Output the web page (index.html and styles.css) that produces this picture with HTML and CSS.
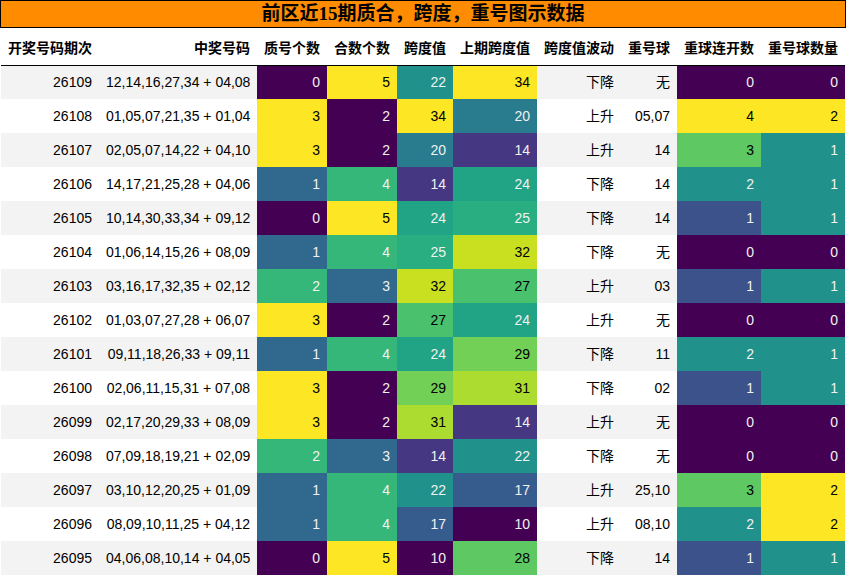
FILE: index.html
```html
<!DOCTYPE html>
<html lang="zh">
<head>
<meta charset="utf-8">
<title>前区近15期质合，跨度，重号图示数据</title>
<link rel="stylesheet" href="styles.css">
</head>
<body>
<div class="sheet">
  <div class="title">前区近15期质合，跨度，重号图示数据</div>
  <table class="grid">
    <colgroup>
      <col class="w-idx"><col class="w-nums"><col class="w-70"><col class="w-70"><col class="w-56"><col class="w-84"><col class="w-84"><col class="w-56"><col class="w-84"><col class="w-84">
    </colgroup>
    <thead>
      <tr><th>开奖号码期次</th><th>中奖号码</th><th>质号个数</th><th>合数个数</th><th>跨度值</th><th>上期跨度值</th><th>跨度值波动</th><th>重号球</th><th>重球连开数</th><th>重号球数量</th></tr>
    </thead>
    <tbody>
      <tr><td>26109</td><td>12,14,16,27,34 + 04,08</td><td class="c00">0</td><td class="c100">5</td><td class="k22">22</td><td class="k34">34</td><td>下降</td><td>无</td><td class="c00">0</td><td class="c00">0</td></tr>
      <tr><td>26108</td><td>01,05,07,21,35 + 01,04</td><td class="c100">3</td><td class="c00">2</td><td class="k34">34</td><td class="k20">20</td><td>上升</td><td>05,07</td><td class="c100">4</td><td class="c100">2</td></tr>
      <tr><td>26107</td><td>02,05,07,14,22 + 04,10</td><td class="c100">3</td><td class="c00">2</td><td class="k20">20</td><td class="k14">14</td><td>上升</td><td>14</td><td class="c75">3</td><td class="c50">1</td></tr>
      <tr><td>26106</td><td>14,17,21,25,28 + 04,06</td><td class="c33">1</td><td class="c67">4</td><td class="k14">14</td><td class="k24">24</td><td>下降</td><td>14</td><td class="c50">2</td><td class="c50">1</td></tr>
      <tr><td>26105</td><td>10,14,30,33,34 + 09,12</td><td class="c00">0</td><td class="c100">5</td><td class="k24">24</td><td class="k25">25</td><td>下降</td><td>14</td><td class="c25">1</td><td class="c50">1</td></tr>
      <tr><td>26104</td><td>01,06,14,15,26 + 08,09</td><td class="c33">1</td><td class="c67">4</td><td class="k25">25</td><td class="k32">32</td><td>下降</td><td>无</td><td class="c00">0</td><td class="c00">0</td></tr>
      <tr><td>26103</td><td>03,16,17,32,35 + 02,12</td><td class="c67">2</td><td class="c33">3</td><td class="k32">32</td><td class="k27">27</td><td>上升</td><td>03</td><td class="c25">1</td><td class="c50">1</td></tr>
      <tr><td>26102</td><td>01,03,07,27,28 + 06,07</td><td class="c100">3</td><td class="c00">2</td><td class="k27">27</td><td class="k24">24</td><td>上升</td><td>无</td><td class="c00">0</td><td class="c00">0</td></tr>
      <tr><td>26101</td><td>09,11,18,26,33 + 09,11</td><td class="c33">1</td><td class="c67">4</td><td class="k24">24</td><td class="k29">29</td><td>下降</td><td>11</td><td class="c50">2</td><td class="c50">1</td></tr>
      <tr><td>26100</td><td>02,06,11,15,31 + 07,08</td><td class="c100">3</td><td class="c00">2</td><td class="k29">29</td><td class="k31">31</td><td>下降</td><td>02</td><td class="c25">1</td><td class="c50">1</td></tr>
      <tr><td>26099</td><td>02,17,20,29,33 + 08,09</td><td class="c100">3</td><td class="c00">2</td><td class="k31">31</td><td class="k14">14</td><td>上升</td><td>无</td><td class="c00">0</td><td class="c00">0</td></tr>
      <tr><td>26098</td><td>07,09,18,19,21 + 02,09</td><td class="c67">2</td><td class="c33">3</td><td class="k14">14</td><td class="k22">22</td><td>下降</td><td>无</td><td class="c00">0</td><td class="c00">0</td></tr>
      <tr><td>26097</td><td>03,10,12,20,25 + 01,09</td><td class="c33">1</td><td class="c67">4</td><td class="k22">22</td><td class="k17">17</td><td>上升</td><td>25,10</td><td class="c75">3</td><td class="c100">2</td></tr>
      <tr><td>26096</td><td>08,09,10,11,25 + 04,12</td><td class="c33">1</td><td class="c67">4</td><td class="k17">17</td><td class="k10">10</td><td>上升</td><td>08,10</td><td class="c50">2</td><td class="c100">2</td></tr>
      <tr><td>26095</td><td>04,06,08,10,14 + 04,05</td><td class="c00">0</td><td class="c100">5</td><td class="k10">10</td><td class="k28">28</td><td>下降</td><td>14</td><td class="c25">1</td><td class="c50">1</td></tr>
    </tbody>
  </table>
</div>
</body>
</html>
```

FILE: styles.css
```css
* { box-sizing: border-box; }

html, body {
  margin: 0;
  padding: 0;
  background: #ffffff;
}

body {
  font-family: "Liberation Sans", "Noto Sans CJK SC", sans-serif;
  font-size: 14px;
  color: #000;
}

.sheet {
  width: 846px;
}

.title {
  height: 28px;
  border: 1px solid #000;
  background: #ff8c00;
  font-family: "Liberation Serif", "Noto Sans CJK SC", serif;
  font-weight: bold;
  font-size: 19px;
  line-height: 26px;
  text-align: center;
  color: #000;
}

.grid {
  margin-left: 1px;
  width: 844px;
  border-collapse: collapse;
  border-spacing: 0;
  table-layout: fixed;
}

.w-idx { width: 98px; }
.w-nums { width: 158px; }
.w-70 { width: 70px; }
.w-56 { width: 56px; }
.w-84 { width: 84px; }

.grid th,
.grid td {
  padding: 0 7px;
  text-align: right;
  white-space: nowrap;
  vertical-align: middle;
}

.grid th {
  height: 37px;
  font-family: "Noto Sans CJK SC", sans-serif;
  font-weight: bold;
  font-size: 14px;
  border-bottom: 1px solid #000;
  padding-top: 1px;
}

.grid td {
  height: 34px;
  line-height: 16px;
}

.grid tbody tr:nth-child(odd) { background: #f3f3f3; }
.grid tbody tr:nth-child(even) { background: #ffffff; }

/* viridis shades, light text on dark cells */
.c00, .k10 { background: #440154; color: #f1f1f1; }
.k14 { background: #453781; color: #f1f1f1; }
.k17 { background: #365c8d; color: #f1f1f1; }
.c25 { background: #3b528b; color: #f1f1f1; }
.c33 { background: #31688e; color: #f1f1f1; }
.k20 { background: #287c8e; color: #f1f1f1; }
.c50, .k22 { background: #21918c; color: #f1f1f1; }
.k24 { background: #21a386; color: #f1f1f1; }
.k25 { background: #28ae80; color: #f1f1f1; }
.c67 { background: #35b779; color: #f1f1f1; }
.k27 { background: #4ac16d; color: #000; }
.c75, .k28 { background: #5ec962; color: #000; }
.k29 { background: #73d056; color: #000; }
.k31 { background: #addc30; color: #000; }
.k32 { background: #c8e020; color: #000; }
.c100, .k34 { background: #fde725; color: #000; }
```
